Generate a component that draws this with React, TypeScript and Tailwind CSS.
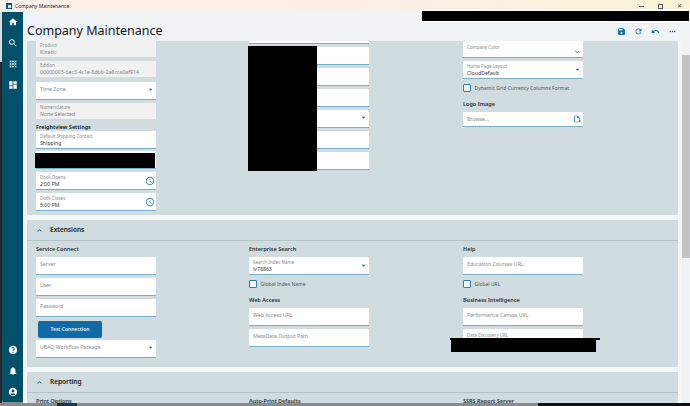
import React from "react";
import {
  MdHome, MdSearch, MdApps, MdDashboard, MdHelp, MdNotifications, MdAccountCircle,
  MdSave, MdRefresh, MdUndo, MdMoreHoriz, MdAccessTime, MdArrowDropDown, MdExpandMore, MdExpandLess, MdOutlineFileOpen,
} from "react-icons/md";

type FieldProps = {
  label: string;
  value?: string;
  icon?: React.ReactNode;
  gray?: boolean;
  small?: boolean;
  className?: string;
};

function Field({ label, value, icon, gray, small, className = "" }: FieldProps) {
  return (
    <div
      className={`flex w-[120px] justify-between px-1 ${value ? "items-center" : "items-start pt-[3px]"} ${gray ? "bg-[#f1f1f1]" : "border-b-[1.5px] border-[#79aecb] bg-white"} ${className}`}
    >
      <div className="flex min-w-0 flex-col">
        <span className={`whitespace-nowrap text-[#858b8e] ${value || small ? "text-[4.5px] leading-[7px]" : "text-[5.2px] leading-[8px]"}`}>{label}</span>
        {value && <span className={`whitespace-nowrap text-[5.2px] leading-[7px] ${gray ? "text-[#7d8386]" : "text-[#30363a]"}`}>{value}</span>}
      </div>
      {icon}
    </div>
  );
}

const Drop = <MdArrowDropDown className="-mr-[2.5px] h-[9px] w-[9px] shrink-0 text-[#0b6aa3]" />;
const Clock = <MdAccessTime className="-mr-[2.5px] h-[10px] w-[10px] shrink-0 text-[#2f86b8]" />;

function Heading({ children, className = "" }: { children: React.ReactNode; className?: string }) {
  return <div className={`text-[5.5px] font-semibold leading-[8px] text-[#2a2f33] ${className}`}>{children}</div>;
}

function Check({ label, className = "" }: { label: string; className?: string }) {
  return (
    <div className={`flex items-center gap-[3.5px] ${className}`}>
      <span className="h-[8px] w-[8px] rounded-[1px] border border-[#2f7fae] bg-[#f7fafb]" />
      <span className="text-[5px] leading-[8px] text-[#4e5559]">{label}</span>
    </div>
  );
}

function SectionBar({ title, className = "" }: { title: string; className?: string }) {
  return (
    <div className={`flex h-[21px] items-center gap-[6px] border-b border-[#b4c2c7] bg-[#d0dce0] pl-[8px] ${className}`}>
      <MdExpandLess className="h-[9px] w-[9px] text-[#0b6aa3]" />
      <span className="text-[6.5px] font-semibold text-[#1c2124]">{title}</span>
    </div>
  );
}

export default function App() {
  return (
    <div className="relative flex h-[406px] w-[690px] flex-col overflow-hidden bg-[#8b8b8b] font-['Noto_Sans',sans-serif]">
      {/* window title bar */}
      <div className="flex h-[12px] shrink-0 items-center bg-gradient-to-r from-[#fbefea] via-[#f9efe8] to-[#f9f4d6] pl-[6px]">
        <span className="flex h-[6px] w-[6px] items-center justify-center bg-[#0c5a75]">
          <span className="h-[3px] w-[3px] bg-[#cfe2ea]" />
        </span>
        <span className="ml-[3px] text-[5px] leading-[12px] text-[#1b1b1b]">Company Maintenance</span>
        <div className="ml-auto flex items-center gap-[14px] pr-[8px] text-[#444]">
          <span className="h-px w-[5px] bg-[#555]" />
          <span className="h-[5px] w-[5px] border border-[#555]" />
          <span className="text-[6px] leading-[6px]">✕</span>
        </div>
      </div>

      <div className="flex min-h-0 flex-1">
        {/* desktop sliver */}
        <div className="flex w-[2px] shrink-0 flex-col">
          <div className="h-[50px] bg-[#d9d9d9]" />
          <div className="flex-1 bg-[#262626]" />
        </div>

        {/* nav rail */}
        <div className="flex h-[390px] w-[21px] shrink-0 flex-col items-center justify-between rounded-bl-[2px] bg-[#02506a] pb-[5px] pt-[5px] text-white">
          <div className="flex flex-col gap-[11px]">
            <MdHome className="h-[10px] w-[10px]" />
            <MdSearch className="h-[10px] w-[10px]" />
            <MdApps className="h-[10px] w-[10px]" />
            <MdDashboard className="h-[10px] w-[10px]" />
          </div>
          <div className="flex flex-col gap-[11px]">
            <MdHelp className="h-[10px] w-[10px]" />
            <MdNotifications className="h-[10px] w-[10px]" />
            <MdAccountCircle className="h-[10px] w-[10px]" />
          </div>
        </div>

        {/* application */}
        <div className="flex h-[391px] min-w-0 flex-1 flex-col bg-[#eff3f6]">
          <div className="flex h-[29px] shrink-0 items-center justify-between pl-[4px] pr-[13.5px]">
            <h1 className="pt-[9px] text-[12.5px] leading-[20px] text-[#15191c]">Company Maintenance</h1>
            <div className="flex items-center gap-[8px] pt-[9px] text-[#0b6aa3]">
              <MdSave className="h-[9px] w-[9px]" />
              <MdRefresh className="h-[9px] w-[9px]" />
              <MdUndo className="h-[9px] w-[9px]" />
              <MdMoreHoriz className="h-[9px] w-[9px]" />
            </div>
          </div>

          <div className="flex min-h-0 flex-1">
            <div className="flex min-w-0 flex-1 flex-col overflow-hidden bg-[#f4f7f8] pl-[4px] pr-[4px]">
              {/* top section (scrolled) */}
              <div className="grid h-[174px] shrink-0 grid-cols-[213px_214px_1fr] bg-[#d0dce0] pl-[9px]">
                <div className="flex flex-col">
                  <Field gray label="Product" value="Kinetic" className="h-[16px]" />
                  <Field gray label="Edition" value="00000003-6ec3-4c1e-8dbb-2a8cca0af914" className="mt-[4px] h-[16px]" />
                  <Field label="Time Zone" icon={Drop} className="mt-[5px] h-[18px]" />
                  <Field gray label="Nomenclature" value="None Selected" className="mt-[3px] h-[16px]" />
                  <Heading className="mt-[4px] text-[#111]">Freightview Settings</Heading>
                  <Field label="Default Shipping Contact" value="Shipping" className="h-[18px]" />
                  <Field label="" className="mt-[2px] h-[18px]" />
                  <Field label="Dock Opens" value="2:00 PM" icon={Clock} className="mt-[3px] h-[18px]" />
                  <Field label="Dock Closes" value="5:00 PM" icon={Clock} className="mt-[3px] h-[18px]" />
                </div>
                <div className="flex flex-col">
                  <Field label="" className="h-[3px] !pt-0" />
                  <Field label="" className="mt-[3px] h-[18px]" />
                  <Field label="" className="mt-[3px] h-[18px]" />
                  <Field label="" className="mt-[3px] h-[18px]" />
                  <Field label="" icon={Drop} className="mt-[3px] h-[18px]" />
                  <Field label="" className="mt-[3px] h-[18px]" />
                  <Field label="" className="mt-[3px] h-[18px]" />
                </div>
                <div className="flex flex-col">
                  <Field small label="Company Color" icon={<MdExpandMore className="-mr-[1.5px] mt-[4px] h-[8px] w-[8px] shrink-0 text-[#0b6aa3]" />} className="h-[17px]" />
                  <Field label="Home Page Layout" value="CloudDefault" icon={Drop} className="mt-[3px] h-[18px]" />
                  <Check label="Dynamic Grid Currency Columns Format" className="mt-[5px]" />
                  <Heading className="mt-[8px]">Logo Image</Heading>
                  <Field label="Browse..." icon={<MdOutlineFileOpen className="-mr-[1.5px] h-[8px] w-[8px] shrink-0 text-[#0b6aa3]" />} className="mt-[4px] h-[15px]" />
                </div>
              </div>

              <SectionBar title="Extensions" className="mt-[5px] shrink-0" />
              <div className="grid h-[126px] shrink-0 grid-cols-[213px_214px_1fr] bg-[#d0dce0] pl-[9px] pt-[4px]">
                <div className="flex flex-col">
                  <Heading>Service Connect</Heading>
                  <Field label="Server" className="mt-[4px] h-[18px]" />
                  <Field label="User" className="mt-[3px] h-[18px]" />
                  <Field label="Password" className="mt-[3px] h-[18px]" />
                  <button className="ml-[2px] mt-[4px] h-[17px] w-[64px] rounded-[2px] bg-[#0f6aa5] text-[5px] font-semibold text-[#e8f2f8]">Test Connection</button>
                  <Field label="UBAQ Workflow Package" icon={Drop} className="mt-[2px] h-[18px]" />
                </div>
                <div className="flex flex-col">
                  <Heading>Enterprise Search</Heading>
                  <Field label="Search Index Name" value="lv78863" icon={Drop} className="mt-[4px] h-[18px]" />
                  <Check label="Global Index Name" className="mt-[5px]" />
                  <Heading className="mt-[8px]">Web Access</Heading>
                  <Field label="Web Access URL" className="mt-[4px] h-[18px]" />
                  <Field label="MetaData Output Path" className="mt-[3px] h-[18px]" />
                </div>
                <div className="flex flex-col">
                  <Heading>Help</Heading>
                  <Field label="Education Courses URL:" className="mt-[4px] h-[18px]" />
                  <Check label="Global URL" className="mt-[5px]" />
                  <Heading className="mt-[8px]">Business Intelligence</Heading>
                  <Field label="Performance Canvas URL" className="mt-[4px] h-[18px]" />
                  <Field small label="Data Discovery URL" className="mt-[3px] h-[18px]" />
                </div>
              </div>

              <SectionBar title="Reporting" className="mt-[5px] shrink-0" />
              <div className="grid flex-1 grid-cols-[213px_214px_1fr] bg-[#d0dce0] pl-[9px] pt-[4px]">
                <Heading>Print Options</Heading>
                <Heading>Auto-Print Defaults</Heading>
                <Heading>SSRS Report Server</Heading>
              </div>
            </div>

            {/* scrollbar */}
            <div className="flex w-[8px] shrink-0 flex-col bg-[#eff3f6] pt-[14px]">
              <div className="h-[203px] bg-[#c2c4c6]" />
            </div>
          </div>
        </div>
      </div>

      {/* taskbar sliver */}
      <div className="flex h-[3px] shrink-0">
        <div className="w-[57px] bg-[#8b8b8b]" />
        <div className="w-[20px] bg-[#123a52]" />
        <div className="w-[461px] bg-[#8b8b8b]" />
        <div className="flex-1 bg-[#111]" />
      </div>

      {/* redactions */}
      <div className="absolute left-[421px] top-[10px] h-[12px] w-[269px] border border-white bg-black" />
      <div className="absolute left-[248px] top-[46px] h-[125px] w-[69px] bg-black" />
      <div className="absolute left-[35px] top-[153px] h-[15px] w-[120px] bg-black" />
      <div className="absolute left-[451px] top-[338px] h-[14px] w-[145px] bg-black" />
      <div className="absolute left-[450px] top-[338px] h-[2px] w-[150px] bg-black" />
    </div>
  );
}
